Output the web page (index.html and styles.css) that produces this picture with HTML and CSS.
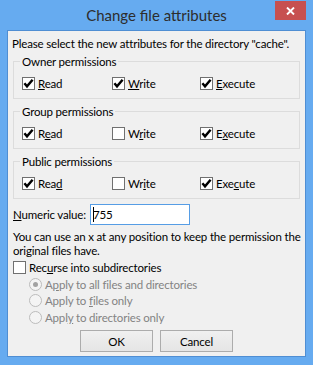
FILE: index.html
```html
<!DOCTYPE html>
<html>
<head>
<meta charset="utf-8">
<link rel="stylesheet" href="styles.css">
</head>
<body>
<div class="window">
  <div class="titlebar">
    <span class="spacer"></span>
    <span class="title">Change file attributes</span>
    <div class="close-wrap">
      <div class="close">
        <svg width="9" height="8" viewBox="0 0 9 8"><path d="M1 0.5 L8 7.5 M8 0.5 L1 7.5" stroke="#fff" stroke-width="1.9" fill="none"/></svg>
      </div>
    </div>
  </div>
  <div class="client">
    <div class="intro">Please select the new attributes for the directory "cache".</div>

    <div class="group">
      <div class="legend">Owner permissions</div>
      <div class="checks">
        <div class="check"><span class="box"><svg width="11" height="11" viewBox="0 0 11 11"><path d="M1.4 5.3 L4 8.3 L9.6 1.7" stroke="#000" stroke-width="2.4" fill="none"/></svg></span><span><u>R</u>ead</span></div>
        <div class="check"><span class="box"><svg width="11" height="11" viewBox="0 0 11 11"><path d="M1.4 5.3 L4 8.3 L9.6 1.7" stroke="#000" stroke-width="2.4" fill="none"/></svg></span><span><u>W</u>rite</span></div>
        <div class="check"><span class="box"><svg width="11" height="11" viewBox="0 0 11 11"><path d="M1.4 5.3 L4 8.3 L9.6 1.7" stroke="#000" stroke-width="2.4" fill="none"/></svg></span><span><u>E</u>xecute</span></div>
      </div>
    </div>

    <div class="group">
      <div class="legend">Group permissions</div>
      <div class="checks">
        <div class="check"><span class="box"><svg width="11" height="11" viewBox="0 0 11 11"><path d="M1.4 5.3 L4 8.3 L9.6 1.7" stroke="#000" stroke-width="2.4" fill="none"/></svg></span><span>R<u>e</u>ad</span></div>
        <div class="check"><span class="box"></span><span>W<u>r</u>ite</span></div>
        <div class="check"><span class="box"><svg width="11" height="11" viewBox="0 0 11 11"><path d="M1.4 5.3 L4 8.3 L9.6 1.7" stroke="#000" stroke-width="2.4" fill="none"/></svg></span><span>E<u>x</u>ecute</span></div>
      </div>
    </div>

    <div class="group">
      <div class="legend">Public permissions</div>
      <div class="checks">
        <div class="check"><span class="box"><svg width="11" height="11" viewBox="0 0 11 11"><path d="M1.4 5.3 L4 8.3 L9.6 1.7" stroke="#000" stroke-width="2.4" fill="none"/></svg></span><span>Rea<u>d</u></span></div>
        <div class="check"><span class="box"></span><span>Wr<u>i</u>te</span></div>
        <div class="check"><span class="box"><svg width="11" height="11" viewBox="0 0 11 11"><path d="M1.4 5.3 L4 8.3 L9.6 1.7" stroke="#000" stroke-width="2.4" fill="none"/></svg></span><span>Exe<u>c</u>ute</span></div>
      </div>
    </div>

    <div class="numeric">
      <span class="numeric-label"><u>N</u>umeric value:</span>
      <div class="input"><span class="caret"></span>755</div>
    </div>

    <div class="info">You can use an x at any position to keep the permission the<br>original files have.</div>

    <div class="recurse"><span class="box"></span><span>Rec<u>u</u>rse into subdirectories</span></div>

    <div class="radios">
      <div class="radio"><span class="dot checked"></span><span>A<u>p</u>ply to all files and directories</span></div>
      <div class="radio"><span class="dot"></span><span>Apply to <u>f</u>iles only</span></div>
      <div class="radio"><span class="dot"></span><span>Appl<u>y</u> to directories only</span></div>
    </div>

    <div class="buttons">
      <div class="button">OK</div>
      <div class="button">Cancel</div>
    </div>
  </div>
</div>
</body>
</html>
```

FILE: styles.css
```css
html, body {
  margin: 0;
  padding: 0;
}
body {
  width: 313px;
  height: 365px;
  overflow: hidden;
  font-family: "Lato", "Open Sans", sans-serif;
  font-size: 11.5px;
  letter-spacing: -0.17px;
  color: #000;
}
.window {
  width: 313px;
  height: 365px;
  box-sizing: border-box;
  background: #66abf0;
  padding: 0 7px 8px 7px;
  display: flex;
  flex-direction: column;
}
.titlebar {
  height: 30px;
  display: grid;
  grid-template-columns: 1fr auto 1fr;
  align-items: start;
}
.title {
  font-size: 15px;
  letter-spacing: 0;
  line-height: 30px;
  color: #2d2d2d;
  white-space: nowrap;
}
.close-wrap {
  display: flex;
  justify-content: flex-end;
}
.close {
  margin-top: 1px;
  width: 31px;
  height: 19px;
  background: #c75050;
  display: flex;
  align-items: center;
  justify-content: center;
}
.client {
  flex: 1;
  background: #f0f0f0;
  border: 1px solid #4f8ed3;
  display: flex;
  flex-direction: column;
  padding: 5px 5px 4px 5px;
}
.intro {
  line-height: 15px;
  margin-left: -1px;
  white-space: nowrap;
}
.group {
  margin-top: 10px;
  height: 38px;
  box-sizing: border-box;
  border: 1px solid #dcdcdc;
  padding: 0 0 0 8px;
}
.group + .group {
  margin-top: 12px;
}
.legend {
  width: fit-content;
  margin: -8px 0 0 -2px;
  padding: 0 2px;
  background: #f0f0f0;
  line-height: 15px;
}
.checks {
  margin-top: 7px;
  display: grid;
  grid-template-columns: 90px 88px auto;
  height: 15px;
}
.check, .recurse, .radio {
  display: flex;
  align-items: center;
  gap: 3px;
  line-height: 15px;
}
.box {
  width: 13px;
  height: 13px;
  box-sizing: border-box;
  border: 1px solid #707070;
  background: #fff;
  display: flex;
  align-items: center;
  justify-content: center;
  flex: none;
}
u {
  text-underline-offset: 1px;
}
.numeric {
  margin-top: 5px;
  display: flex;
  align-items: center;
  height: 21px;
}
.numeric-label {
  width: 77px;
  flex: none;
}
.input {
  width: 100px;
  height: 21px;
  box-sizing: border-box;
  border: 1px solid #569de5;
  background: #fff;
  display: flex;
  align-items: center;
  padding-left: 2px;
  line-height: 15px;
}
.caret {
  width: 1px;
  height: 15px;
  background: #000;
  margin-right: -1px;
}
.info {
  margin-top: 5px;
  line-height: 14px;
  white-space: nowrap;
}
.recurse {
  margin-top: 2px;
}
.radios {
  padding-left: 16px;
  color: #838383;
  margin-top: 1px;
}
.radio {
  height: 16.5px;
}
.dot {
  width: 13px;
  height: 13px;
  box-sizing: border-box;
  border-radius: 50%;
  border: 1px solid #bcbcbc;
  background: #f4f4f4;
  flex: none;
  display: flex;
  align-items: center;
  justify-content: center;
}
.dot.checked::after {
  content: "";
  width: 5px;
  height: 5px;
  border-radius: 50%;
  background: #a2a2a2;
}
.buttons {
  margin-top: auto;
  display: flex;
  justify-content: center;
  gap: 7px;
}
.button {
  width: 73px;
  height: 22px;
  box-sizing: border-box;
  border: 1px solid #acacac;
  background: linear-gradient(#f0f0f0, #e5e5e5);
  display: flex;
  align-items: center;
  justify-content: center;
}
```
